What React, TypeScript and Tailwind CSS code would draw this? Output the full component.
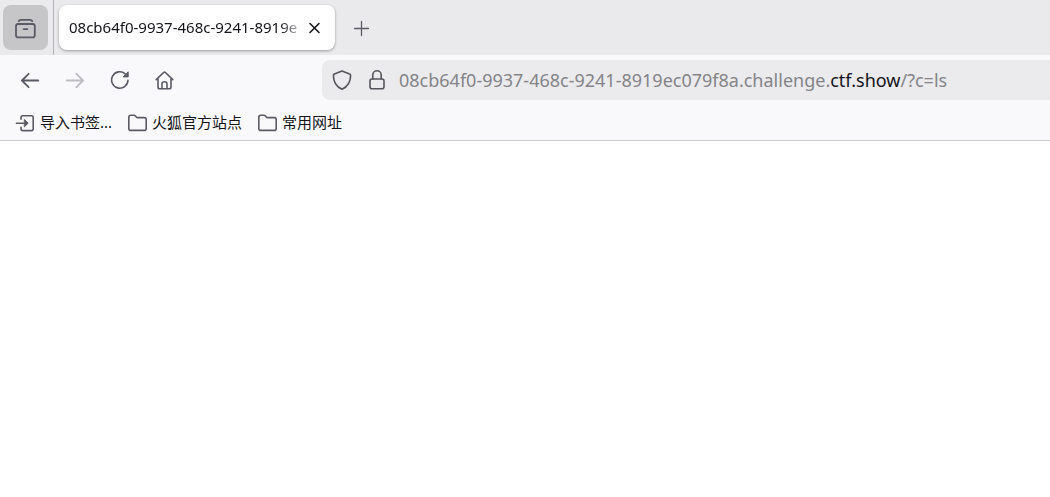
import { JSX } from "react/jsx-runtime";

interface Bookmark {
  id: number;
  label: string;
  icon: "import" | "folder";
}

const bookmarks: Bookmark[] = [
  { id: 1, label: "导入书签...", icon: "import" },
  { id: 2, label: "火狐官方站点", icon: "folder" },
  { id: 3, label: "常用网址", icon: "folder" },
];

const tabTitle = "08cb64f0-9937-468c-9241-8919e";
const host = "08cb64f0-9937-468c-9241-8919ec079f8a.challenge.";
const domain = "ctf.show";
const path = "/?c=ls";

interface IconProps {
  children: React.ReactNode;
}

// 20px line icon, shared by all the bars
function Icon({ children }: IconProps): JSX.Element {
  return (
    <svg
      className="size-5 shrink-0"
      viewBox="0 0 20 20"
      fill="none"
      stroke="currentColor"
      strokeWidth="1.6"
      strokeLinecap="round"
      strokeLinejoin="round"
      aria-hidden="true"
    >
      {children}
    </svg>
  );
}

function TabBar(): JSX.Element {
  return (
    <div className="flex h-[55px] bg-[#eaeaec]">
      <div className="flex items-center border-r border-[#b4b4b8] pr-[5px] pl-[3px]">
        <button type="button" aria-label="Firefox View" className="flex size-[45px] items-center justify-center rounded-lg bg-[#c6c6c8] text-[#5b5b66]">
          <svg className="size-6" viewBox="0 0 24 24" fill="none" stroke="currentColor" strokeWidth="1.8" strokeLinecap="round" strokeLinejoin="round" aria-hidden="true">
            <path d="M4.8 5.2Q5.2 3.8 6.8 3.8h9.4Q17.8 3.8 18.2 5.2" />
            <rect x="2" y="8" width="18.8" height="13.4" rx="2.2" />
            <path d="M9.6 13.1h3.8" />
          </svg>
        </button>
      </div>
      <div className="flex items-center pl-[5px]">
        <div className="flex h-[45px] w-[276px] items-center rounded-lg bg-white pr-2.5 pl-2.5 shadow-[0_1px_3px_rgba(0,0,0,0.35)]">
          <span className="min-w-0 flex-1 overflow-hidden text-[15px] whitespace-nowrap text-[#15141a] [mask-image:linear-gradient(to_left,transparent,black_24px)]">
            {tabTitle}
          </span>
          <button type="button" aria-label="Close tab" className="flex size-5 items-center justify-center text-[#15141a]">
            <Icon>
              <path d="M5 5.5l9 9M14 5.5l-9 9" />
            </Icon>
          </button>
        </div>
        <button type="button" aria-label="New tab" className="ml-1.5 flex size-10 items-center justify-center text-[#5b5b66]">
          <Icon>
            <path d="M10.5 3.5v14M3.5 10.5h14" strokeWidth="1.3" />
          </Icon>
        </button>
      </div>
    </div>
  );
}

function Toolbar(): JSX.Element {
  return (
    <div className="flex h-[50px] items-center pl-2.5">
      <div className="flex gap-[5px] text-[#5b5b66]">
        <button type="button" aria-label="Back" className="flex size-10 items-center justify-center">
          <Icon>
            <path d="M18.3 10.5H2M8.6 3.8L1.9 10.5l6.7 6.7" strokeWidth="1.8" />
          </Icon>
        </button>
        <button type="button" aria-label="Forward" disabled className="flex size-10 items-center justify-center text-[#bdbdc2]">
          <Icon>
            <path d="M1.7 10.5H18M11.4 3.8l6.7 6.7-6.7 6.7" strokeWidth="1.8" />
          </Icon>
        </button>
        <button type="button" aria-label="Reload" className="flex size-10 items-center justify-center">
          <Icon>
            <path d="M18 10.3A8.2 8.2 0 1 1 15.2 3.8" />
            <path d="M18.2 2.2v4.7h-4.7z" fill="currentColor" strokeWidth="1" />
          </Icon>
        </button>
        <button type="button" aria-label="Home" className="flex size-10 items-center justify-center">
          <Icon>
            <path d="M1.2 9.6l7.4-7.1q.9-.8 1.8 0l7.4 7.1" />
            <path d="M3 9v8q0 1.8 1.8 1.8h9.4q1.8 0 1.8-1.8V9" />
            <path d="M7 18.6v-4.8q0-2 2.5-2t2.5 2v4.8" />
          </Icon>
        </button>
      </div>
      <div className="ml-[137px] flex h-10 min-w-0 flex-1 items-center rounded-l-lg bg-[#ebebed] pl-2.5 text-[#55555c]">
        <button type="button" aria-label="Tracking protection">
          <Icon>
            <path d="M10 1.1L17.6 4q1 .4 1 1.5C18.6 12 15 17 10 19.3 5 17 1.4 12 1.4 5.5q0-1.1 1-1.5z" />
          </Icon>
        </button>
        <button type="button" aria-label="Site information" className="ml-[15px]">
          <Icon>
            <rect x="3" y="9" width="14" height="9.8" rx="2" />
            <path d="M5.8 9V5a4.2 4.2 0 0 1 8.4 0v4" />
          </Icon>
        </button>
        {/* The colored address sits under a see-through input */}
        <div className="ml-3 grid flex-1 items-center overflow-hidden text-lg whitespace-nowrap">
          <span aria-hidden="true" className="col-start-1 row-start-1 text-[#848488]">
            {host}
            <span className="text-[#15141a]">{domain}</span>
            {path}
          </span>
          <input
            type="text"
            aria-label="Address"
            defaultValue={host + domain + path}
            className="col-start-1 row-start-1 min-w-0 bg-transparent text-transparent caret-black outline-none"
          />
        </div>
      </div>
    </div>
  );
}

function BookmarksBar(): JSX.Element {
  return (
    <div className="flex h-9 items-center gap-[15px] border-b border-[#cccccc] pl-[15px]">
      {bookmarks.map((item) => (
        <button key={item.id} type="button" className="flex items-center gap-[5px] text-[15px] whitespace-nowrap text-[#15141a]">
          <span className="text-[#5b5b66]">
            {item.icon === "import" ? (
              <Icon>
                <path d="M6 6.2V4.6q0-1.8 1.8-1.8h8.6q1.8 0 1.8 1.8v11.2q0 1.8-1.8 1.8H7.8q-1.8 0-1.8-1.8v-1.6" />
                <path d="M1.4 10.2h9" />
                <path d="M9.6 6.8l3.6 3.4-3.6 3.4z" fill="currentColor" strokeWidth="1" />
              </Icon>
            ) : (
              <Icon>
                <path d="M1.8 4.2q0-2 2-2h3.1q.9 0 1.5.7l1 1.2q.5.5 1.2.5h6.6q2 0 2 2v8.8q0 2-2 2H3.8q-2 0-2-2z" />
              </Icon>
            )}
          </span>
          {item.label}
        </button>
      ))}
    </div>
  );
}

export default function App(): JSX.Element {
  return (
    <div className="flex min-h-screen flex-col bg-white font-['Noto_Sans','Noto_Sans_CJK_SC',sans-serif]">
      <header className="bg-[#f9f9fb]">
        <TabBar />
        <Toolbar />
        <BookmarksBar />
      </header>
      <main className="flex-1 bg-white" />
    </div>
  );
}
